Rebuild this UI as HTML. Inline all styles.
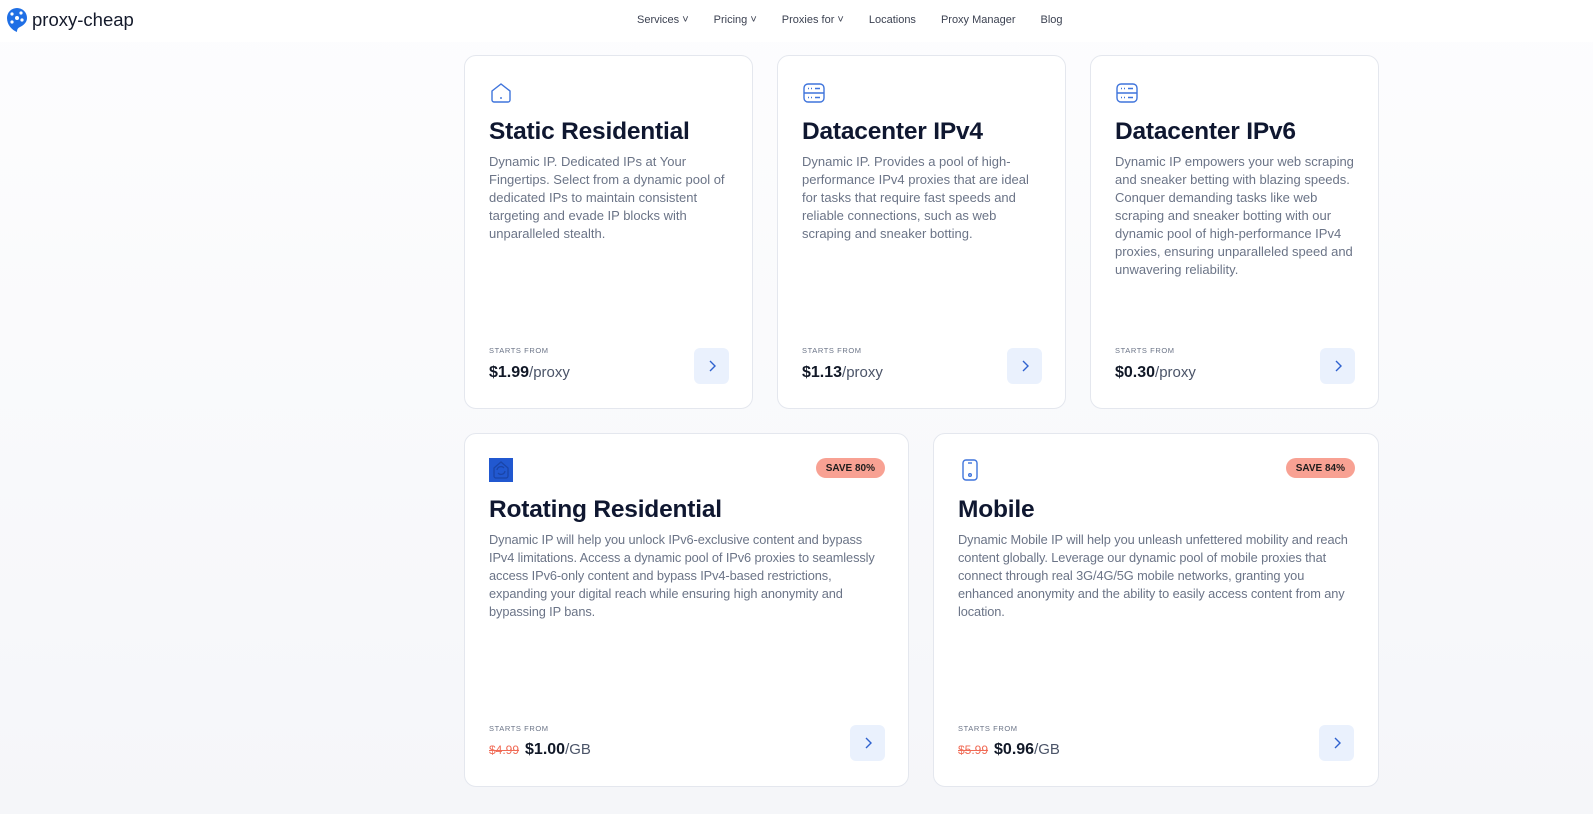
<!DOCTYPE html>
<html><head><meta charset="utf-8"><style>
*{margin:0;padding:0;box-sizing:border-box}
body{width:1593px;height:814px;overflow:hidden;font-family:"Liberation Sans",sans-serif;background:linear-gradient(#fdfdfe,#f5f6f9);position:relative}
.hdr{position:absolute;top:0;left:0;right:0;height:42px;background:#fff}
.logo{position:absolute;left:6px;top:7px;display:flex;align-items:center;gap:4px;font-size:18.5px;color:#141a2b}
.nav{position:absolute;top:14px;left:637px;font-size:11px;color:#3c4252;display:flex;gap:0}
.nav span{margin-right:25px}
.card{position:absolute;background:#fff;border:1px solid #e4e7ee;border-radius:12px}
.ic{position:absolute;left:24px}
.t{position:absolute;left:24px;font-size:24.5px;font-weight:bold;color:#0f1730;letter-spacing:-0.2px}
.d{position:absolute;left:24px;font-size:13px;line-height:18px;color:#6b7487}
.w .d{font-size:12.8px;letter-spacing:-0.1px}
.sf{position:absolute;left:24px;font-size:7.5px;letter-spacing:.6px;color:#6b7487}
.p{position:absolute;left:24px;font-size:16px;color:#111827;font-weight:bold;white-space:nowrap}
.p small{font-size:15px;font-weight:normal;color:#4b5468}
.p s{color:#f06a55;font-weight:normal;font-size:12px;margin-right:6px}
.btn{position:absolute;width:35px;height:36px;background:#eaf1fd;border-radius:6px;display:flex;align-items:center;justify-content:center}
.badge{position:absolute;top:24px;right:23px;background:#f8a193;color:#1d1d1d;font-size:10px;font-weight:bold;border-radius:10px;padding:5px 10px;height:20px}
</style></head><body>
<div class="hdr">
<div class="logo"><svg width="22" height="26" viewBox="0 0 22 26"><path d="M11 1a10 10 0 0 0-10 10c0 7 5 12 10 14 0-3 1-4 3-5 4-2 7-5 7-9A10 10 0 0 0 11 1z" fill="#1f6fe5"/><circle cx="11" cy="11" r="2" fill="#fff"/><circle cx="6" cy="7" r="1.6" fill="#fff"/><circle cx="15" cy="6" r="1.6" fill="#fff"/><circle cx="16" cy="13" r="1.6" fill="#fff"/><circle cx="6" cy="15" r="1.6" fill="#fff"/></svg><span>proxy-cheap</span></div>
<div class="nav"><span>Services ˅</span><span>Pricing ˅</span><span>Proxies for ˅</span><span>Locations</span><span>Proxy Manager</span><span>Blog</span></div>
</div>

<div class="card" style="left:464px;top:55px;width:289px;height:354px">
<svg class="ic" style="top:25px" width="24" height="24" viewBox="0 0 24 24" fill="none" stroke="#3f74dc" stroke-width="1.4"><path d="M3 10l9-7 9 7v9a2 2 0 0 1-2 2H5a2 2 0 0 1-2-2z"/><path d="M12 16v2"/></svg>
<div class="t" style="top:62px">Static Residential</div>
<div class="d" style="top:97px;width:240px">Dynamic IP. Dedicated IPs at Your Fingertips. Select from a dynamic pool of dedicated IPs to maintain consistent targeting and evade IP blocks with unparalleled stealth.</div>
<div class="sf" style="top:290px">STARTS FROM</div><div class="p" style="top:308px">$1.99<small>/proxy</small></div>
<div class="btn" style="left:229px;top:292px"><svg width="12" height="14" viewBox="0 0 12 14" fill="none" stroke="#2f62cf" stroke-width="1.4"><path d="M4 2l5 5-5 5"/></svg></div>
</div>

<div class="card" style="left:777px;top:55px;width:289px;height:354px">
<svg class="ic" style="top:25px" width="24" height="24" viewBox="0 0 24 24" fill="none" stroke="#3f74dc" stroke-width="1.4"><rect x="2" y="3" width="20" height="18" rx="4"/><path d="M2 12h20M6 7.5h1M9 7.5h1M13 7.5h5M6 16.5h1M9 16.5h1M13 16.5h5"/></svg>
<div class="t" style="top:62px">Datacenter IPv4</div>
<div class="d" style="top:97px;width:240px">Dynamic IP. Provides a pool of high-performance IPv4 proxies that are ideal for tasks that require fast speeds and reliable connections, such as web scraping and sneaker botting.</div>
<div class="sf" style="top:290px">STARTS FROM</div><div class="p" style="top:308px">$1.13<small>/proxy</small></div>
<div class="btn" style="left:229px;top:292px"><svg width="12" height="14" viewBox="0 0 12 14" fill="none" stroke="#2f62cf" stroke-width="1.4"><path d="M4 2l5 5-5 5"/></svg></div>
</div>

<div class="card" style="left:1090px;top:55px;width:289px;height:354px">
<svg class="ic" style="top:25px" width="24" height="24" viewBox="0 0 24 24" fill="none" stroke="#3f74dc" stroke-width="1.4"><rect x="2" y="3" width="20" height="18" rx="4"/><path d="M2 12h20M6 7.5h1M9 7.5h1M13 7.5h5M6 16.5h1M9 16.5h1M13 16.5h5"/></svg>
<div class="t" style="top:62px">Datacenter IPv6</div>
<div class="d" style="top:97px;width:240px">Dynamic IP empowers your web scraping and sneaker betting with blazing speeds. Conquer demanding tasks like web scraping and sneaker botting with our dynamic pool of high-performance IPv4 proxies, ensuring unparalleled speed and unwavering reliability.</div>
<div class="sf" style="top:290px">STARTS FROM</div><div class="p" style="top:308px">$0.30<small>/proxy</small></div>
<div class="btn" style="left:229px;top:292px"><svg width="12" height="14" viewBox="0 0 12 14" fill="none" stroke="#2f62cf" stroke-width="1.4"><path d="M4 2l5 5-5 5"/></svg></div>
</div>

<div class="card w" style="left:464px;top:433px;width:445px;height:354px">
<svg class="ic" style="top:24px" width="24" height="24" viewBox="0 0 24 24"><rect width="24" height="24" fill="#2158d0"/><path d="M5 10l7-6 7 6v8a2 2 0 0 1-2 2H7a2 2 0 0 1-2-2z" fill="none" stroke="#1a45a8" stroke-width="1.3"/><path d="M8 12a4 4 0 0 1 7-2M16 13a4 4 0 0 1-7 2" fill="none" stroke="#1a45a8" stroke-width="1.3"/></svg>
<div class="badge">SAVE 80%</div>
<div class="t" style="top:62px">Rotating Residential</div>
<div class="d" style="top:97px;width:396px">Dynamic IP will help you unlock IPv6-exclusive content and bypass IPv4 limitations. Access a dynamic pool of IPv6 proxies to seamlessly access IPv6-only content and bypass IPv4-based restrictions, expanding your digital reach while ensuring high anonymity and bypassing IP bans.</div>
<div class="sf" style="top:290px">STARTS FROM</div><div class="p" style="top:307px"><s>$4.99</s>$1.00<small>/GB</small></div>
<div class="btn" style="left:385px;top:291px"><svg width="12" height="14" viewBox="0 0 12 14" fill="none" stroke="#2f62cf" stroke-width="1.4"><path d="M4 2l5 5-5 5"/></svg></div>
</div>

<div class="card w" style="left:933px;top:433px;width:446px;height:354px">
<svg class="ic" style="top:24px" width="24" height="24" viewBox="0 0 24 24" fill="none" stroke="#3f74dc" stroke-width="1.4"><rect x="5" y="2" width="14" height="20" rx="3"/><path d="M10 5h4"/><circle cx="12" cy="17" r="1.3"/></svg>
<div class="badge">SAVE 84%</div>
<div class="t" style="top:62px">Mobile</div>
<div class="d" style="top:97px;width:405px">Dynamic Mobile IP will help you unleash unfettered mobility and reach content globally. Leverage our dynamic pool of mobile proxies that connect through real 3G/4G/5G mobile networks, granting you enhanced anonymity and the ability to easily access content from any location.</div>
<div class="sf" style="top:290px">STARTS FROM</div><div class="p" style="top:307px"><s>$5.99</s>$0.96<small>/GB</small></div>
<div class="btn" style="left:385px;top:291px"><svg width="12" height="14" viewBox="0 0 12 14" fill="none" stroke="#2f62cf" stroke-width="1.4"><path d="M4 2l5 5-5 5"/></svg></div>
</div>
</body></html>
